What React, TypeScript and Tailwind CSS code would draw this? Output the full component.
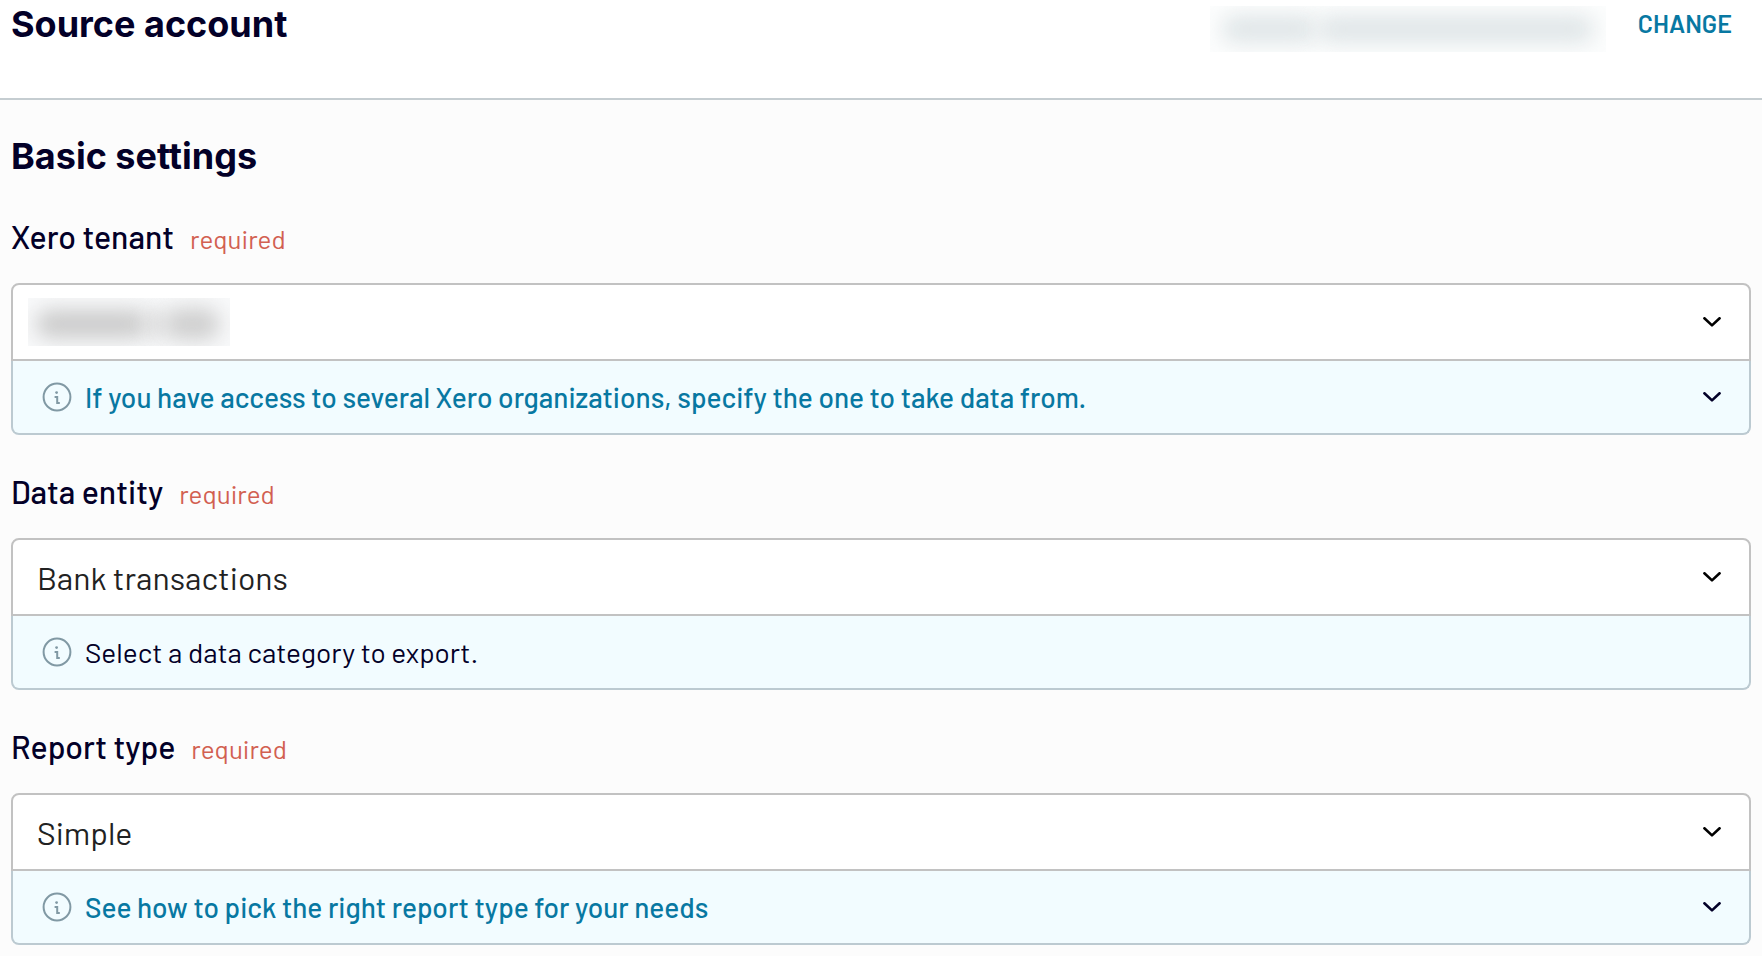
import { useId } from "react";
import type { ReactNode } from "react";

function Chevron({ className }: { className: string }) {
  return (
    <svg viewBox="0 0 18 10" className={className} fill="none" stroke="currentColor" strokeWidth="2.6" strokeLinecap="round" strokeLinejoin="round" aria-hidden="true">
      <path d="M1.4 1.3 9 8.4l7.6-7.1" />
    </svg>
  );
}

function InfoIcon() {
  return (
    <svg viewBox="0 0 30 30" className="size-[30px] shrink-0 text-[#8199a4]" fill="none" stroke="currentColor" strokeWidth="2" aria-hidden="true">
      <circle cx="15" cy="15" r="13.4" />
      <circle cx="14.6" cy="10.6" r="1.4" fill="currentColor" stroke="none" />
      <path d="M12.6 14.9h2.6v6.2h2.6" strokeWidth="2" />
    </svg>
  );
}

type FieldProps = {
  label: string;
  value?: string;
  redacted?: ReactNode;
  hint: string;
  expandable?: boolean;
};

function Field({ label, value = "", redacted, hint, expandable }: FieldProps) {
  const id = useId();
  const hintClass = "flex h-[74px] w-full items-center gap-[13px] rounded-b-lg border-2 border-t-0 border-[#bccad1] bg-[#f2fcff] pr-7 pl-[29px] text-left text-[28px] leading-9";
  return (
    <div>
      <div className="mb-[21px] flex h-12 items-baseline gap-4 leading-11">
        <label htmlFor={id} className="text-[32px] font-medium text-[#030028]">
          {label}
        </label>
        <span className="text-[26px] text-[#d26051]">required</span>
      </div>
      <div className="relative">
        <select id={id} defaultValue={value} className="block h-[78px] w-full appearance-none rounded-t-lg border-2 border-[#c2c2c2] bg-white pr-16 pl-6 text-[32px] text-[#222222]">
          <option value={value}>{value}</option>
        </select>
        {redacted}
        <Chevron className="pointer-events-none absolute top-[34px] right-[30px] h-[10px] w-[18px] text-black" />
      </div>
      {expandable ? (
        <button type="button" aria-expanded="false" className={`${hintClass} font-medium text-[#0878a2]`}>
          <InfoIcon />
          <span className="flex-1">{hint}</span>
          <Chevron className="h-[10px] w-[18px] shrink-0 text-[#030028]" />
        </button>
      ) : (
        <p className={`${hintClass} text-[#030028]`}>
          <InfoIcon />
          {hint}
        </p>
      )}
    </div>
  );
}

export default function App() {
  return (
    <div className="min-h-screen bg-[#fcfcfc] font-[Barlow,Roboto,sans-serif]">
      <header className="flex h-[100px] items-start justify-between border-b-2 border-[#c5cdd1] bg-white pr-[30px] pl-[11px]">
        <h2 className="font-[Inter,sans-serif] text-[36px] leading-[48px] font-bold text-[#030028]">Source account</h2>
        <div className="flex items-start gap-8">
          <div className="mt-[6px] flex h-[46px] w-[396px] items-center overflow-hidden bg-[#fcfdfd] px-3" aria-hidden="true">
            <div className="h-7 w-24 rounded-full bg-[#e0e6e8] blur-[10px]" />
            <div className="h-7 flex-1 rounded-full bg-[#e0e6e8] blur-[10px]" />
          </div>
          <button type="button" className="text-[25px] leading-[46px] font-semibold text-[#0878a2]">
            CHANGE
          </button>
        </div>
      </header>
      <main className="px-[11px] pt-8 pb-[11px]">
        <h2 className="mb-[34px] font-[Inter,sans-serif] text-[36px] leading-[48px] font-bold text-[#030028]">Basic settings</h2>
        <div className="flex flex-col gap-[34px]">
          <Field
            label="Xero tenant"
            hint="If you have access to several Xero organizations, specify the one to take data from."
            expandable
            redacted={
              <div className="pointer-events-none absolute top-[15px] left-[17px] flex h-12 w-[202px] items-center overflow-hidden bg-[#f8f9fa] pt-1" aria-hidden="true">
                <div className="ml-2 h-7 w-28 rounded-full bg-[#cbcbcb] blur-[10px]" />
                <div className="h-6 w-4 bg-[#d6d6d6] blur-[10px]" />
                <div className="h-8 w-14 rounded-full bg-[#cfcfcf] blur-[10px]" />
              </div>
            }
          />
          <Field label="Data entity" value="Bank transactions" hint="Select a data category to export." />
          <Field label="Report type" value="Simple" hint="See how to pick the right report type for your needs" expandable />
        </div>
      </main>
    </div>
  );
}
